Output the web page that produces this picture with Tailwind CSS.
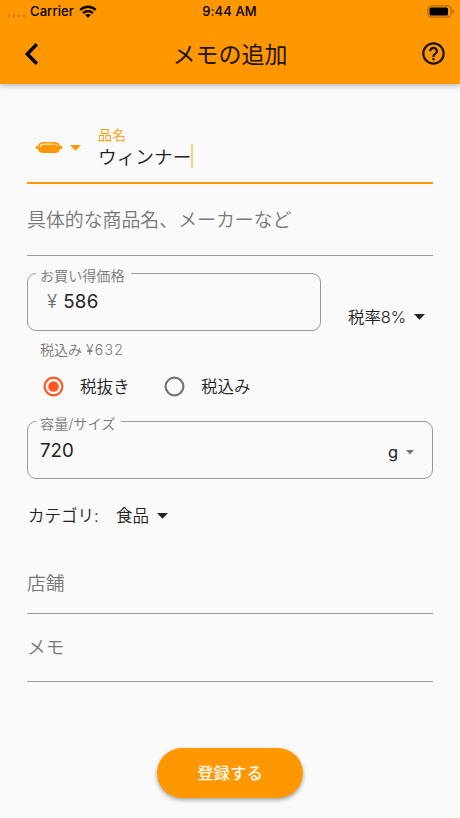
<!DOCTYPE html>
<html lang="ja">
<head>
<meta charset="utf-8">
<title>メモの追加</title>
<script src="https://cdn.jsdelivr.net/npm/@tailwindcss/browser@4"></script>
</head>
<body class="bg-[#fafafa]">
<div class="flex h-[818px] w-[460px] flex-col overflow-hidden bg-[#fafafa] font-['Inter','Noto_Sans_CJK_JP',sans-serif] text-[#212121]">
  <header class="h-[84px] shrink-0 bg-[#ff9800] text-black shadow-[0_2px_5px_rgba(0,0,0,0.25)]">
    <div class="grid h-[23px] grid-cols-[1fr_auto_1fr] items-center pr-[5px] pl-[7px] text-[13px] leading-[23px] font-medium">
      <div class="flex items-center">
        <svg class="mt-[8px] mr-[4px]" width="19" height="4" viewBox="0 0 19 4" fill="#c98019"><circle cx="2" cy="2" r="1.4"/><circle cx="7" cy="2" r="1.4"/><circle cx="12" cy="2" r="1.4"/><circle cx="17" cy="2" r="1.4"/></svg>
        <span class="w-[44px] tracking-[0.1px] whitespace-nowrap">Carrier</span>
        <svg class="ml-[5px]" width="18" height="13" viewBox="0 0 18 13" fill="none" stroke="#000" stroke-width="2.4"><path d="M1.3 5C5.6.7 12.4.7 16.7 5"/><path d="M4.1 8.1c2.7-2.7 7.1-2.7 9.8 0"/><path d="M9 12.8 6.2 10c1.6-1.4 4-1.4 5.6 0z" fill="#000" stroke="none"/></svg>
      </div>
      <span class="mr-[3px] tracking-[0.1px] whitespace-nowrap">9:44 AM</span>
      <svg class="justify-self-end" width="28" height="13" viewBox="0 0 28 13"><rect x=".9" y=".9" width="23.2" height="11.2" rx="3" fill="none" stroke="#9b640c"/><rect x="2.5" y="2.5" width="18.5" height="8" rx="1.5"/><path d="M25.5 4.5q1.6.5 1.6 2t-1.6 2z" fill="#9b640c"/></svg>
    </div>
    <div class="grid h-[61px] grid-cols-[60px_1fr_60px] items-center">
      <svg class="ml-[24px]" width="16" height="24" viewBox="0 0 16 24" fill="none" stroke="#000" stroke-width="3.5"><path d="M12.8 2.3 3.300 12l9.500 9.700"/></svg>
      <h1 class="pt-[2px] text-center text-[23px] leading-[32px] font-normal text-[#211400]">メモの追加</h1>
      <svg class="ml-[20px]" width="27" height="27" viewBox="0 0 24 24" fill="#1a1000"><path d="M11 18h2v-2h-2v2zm1-16C6.480 2 2 6.480 2 12s4.480 10 10 10 10-4.480 10-10S17.520 2 12 2zm0 18c-4.410 0-8-3.590-8-8s3.590-8 8-8 8 3.590 8 8-3.590 8-8 8zm0-14c-2.210 0-4 1.790-4 4h2c0-1.100.9-2 2-2s2 .9 2 2c0 2-3 1.750-3 5h2c0-2.250 3-2.500 3-5 0-2.210-1.790-4-4-4z"/></svg>
    </div>
  </header>
  <main class="flex flex-col px-[27px] font-[350]">
    <div class="flex h-[100px] items-start border-b-2 border-[#ff9800] pt-[42px]">
      <svg class="mt-[15px] ml-[8px]" width="28" height="13" viewBox="0 0 28 13"><path d="M1 5.200 4 6v1L1 7.800zM27 5.200 24 6v1l3 .8z" fill="#ff9800" stroke="#ff9800" stroke-width=".6"/><rect x="2.700" y="1" width="22.600" height="11" rx="5.200" fill="#ff9800"/><path d="M5.300 6C5.500 3.800 7 3.200 9 3.200h9" fill="none" stroke="#fff1d6" stroke-width="1.200" stroke-linecap="round"/><path d="M20.200 3.300q2 .2 2.600 1.500" fill="none" stroke="#fff1d6" stroke-linecap="round"/></svg>
      <svg class="mt-[19px] ml-[7px]" width="11" height="6" viewBox="0 0 11 6" fill="#ff9800"><path d="M0 0h11L5.500 5.700z"/></svg>
      <div class="ml-[17px]">
        <div class="text-[14px] leading-[18px] text-[#ff9800]">品名</div>
        <div class="flex items-center pt-[1px] text-[18.700px] leading-[25px]">ウィンナー<span class="-mt-[4px] h-[24px] w-[2px] bg-[#ffcb80]"></span></div>
      </div>
    </div>
    <div class="h-[72px] border-b border-[#999] pt-[23px] text-[18.900px] leading-[28px] text-[#777]">具体的な商品名、メーカーなど</div>
    <div class="mt-[8px] flex items-start">
      <fieldset class="h-[67px] w-[294px] rounded-[9px] border border-[#999] pl-[8px]">
        <legend class="h-[19px] pr-[6px] pl-[4px] text-[14.100px] leading-[24px] text-[#777]">お買い得価格</legend>
        <div class="flex gap-[6px] pt-[7px] pl-[11px] text-[18.700px] leading-[24px] font-normal tracking-[0.2px]"><span class="font-light text-[#666]">¥</span><span>586</span></div>
      </fieldset>
      <div class="mt-[41px] ml-[27px] flex items-center gap-[8px] text-[16.400px] leading-[24px] whitespace-nowrap"><span class="w-[58px]">税率8%</span><svg width="11" height="6" viewBox="0 0 11 6" fill="#212121"><path d="M0 0h11L5.500 5.700z"/></svg></div>
    </div>
    <div class="mt-[9px] pl-[13px] text-[14px] leading-[20px] text-[#777]">税込み <span class="tracking-[1.3px]">¥632</span></div>
    <div class="mt-[14px] flex h-[24px] items-center pl-[16px] text-[16.500px]">
      <svg width="21" height="21" viewBox="0 0 21 21"><circle cx="10.500" cy="10.500" r="8.900" fill="none" stroke="#ff5722" stroke-width="2.200"/><circle cx="10.500" cy="10.500" r="5.300" fill="#ff5722"/></svg>
      <span class="ml-[16px] w-[50px] pt-[2px] whitespace-nowrap">税抜き</span>
      <svg class="ml-[34px]" width="21" height="21" viewBox="0 0 21 21"><circle cx="10.500" cy="10.500" r="8.900" fill="none" stroke="#757575" stroke-width="2.200"/></svg>
      <span class="ml-[16px] pt-[2px]">税込み</span>
    </div>
    <fieldset class="mt-[14px] h-[67px] rounded-[9px] border border-[#999] pl-[8px]">
      <legend class="h-[19px] pr-[6px] pl-[4px] text-[14.200px] leading-[24px] text-[#777]">容量/サイズ</legend>
      <div class="flex items-center justify-between pt-[7px] pr-[18px] pl-[4px] text-[18.700px] leading-[24px] font-normal"><span>720</span><span class="flex items-center gap-[8px] pt-[2px] text-[16.400px]">g<svg width="8" height="5" viewBox="0 0 8 5" fill="#777"><path d="M0 0h8L4 4.500z"/></svg></span></div>
    </fieldset>
    <div class="mt-[25px] flex h-[24px] items-center text-[16.500px]">
      <span class="w-[89px] pl-px">カテゴリ:</span><span class="w-[41px]">食品</span><svg width="11" height="6" viewBox="0 0 11 6" fill="#212121"><path d="M0 0h11L5.500 5.700z"/></svg>
    </div>
    <div class="mt-[42px] h-[44px] border-b border-[#999] text-[18.700px] leading-[28px] text-[#777]">店舗</div>
    <div class="h-[68px] border-b border-[#999] pt-[20px] text-[18.700px] leading-[28px] text-[#777]">メモ</div>
    <button class="mt-[66px] h-[50px] w-[146px] self-center rounded-full bg-[#ff9800] pt-px text-[16.400px] font-medium text-[#fffaf0] shadow-[0_2px_4px_rgba(0,0,0,0.35)]">登録する</button>
  </main>
</div>
</body>
</html>
